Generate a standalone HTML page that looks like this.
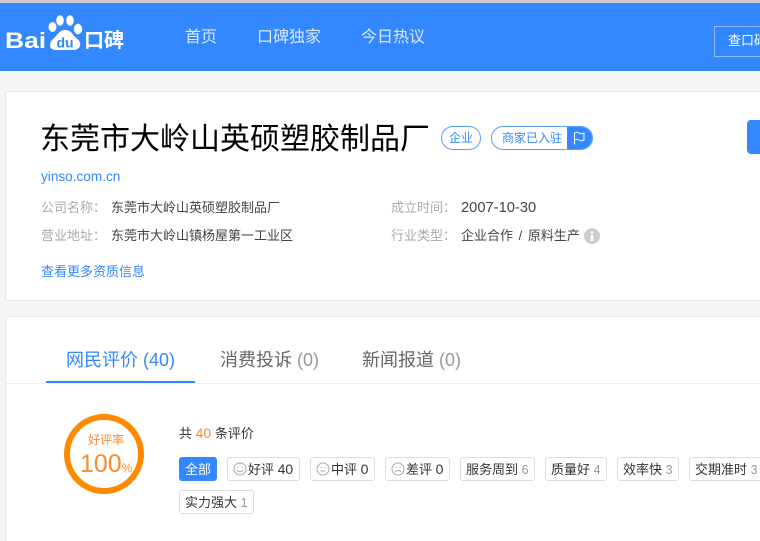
<!DOCTYPE html>
<html lang="zh">
<head>
<meta charset="utf-8">
<style>
html,body{margin:0;padding:0;width:760px;height:541px;overflow:hidden}
body{background:#f5f5f5;font-family:"Liberation Sans","Noto Sans CJK SC",sans-serif;color:#333}
#w{position:relative;width:760px;height:541px;overflow:hidden;background:#f5f5f5}
.a{position:absolute;white-space:nowrap;line-height:1}
.card{position:absolute;left:5px;width:755px;background:#fff;border:1px solid #e8e8e8;border-right:0;border-radius:4px 0 0 4px;box-sizing:border-box}
.tag{position:absolute;top:457px;height:24px;box-sizing:border-box;border:1px solid #ddd;border-radius:3px;background:#fff;font-size:13px;line-height:23px;color:#333;white-space:nowrap;padding-left:5px;overflow:hidden}
.tag b{font-weight:normal;font-size:14px}
.tag i{font-style:normal;color:#999;font-size:12.500px}
.tag svg{vertical-align:-2px;margin-right:1px}
.l{color:#aaa;font-size:13px}
.v{color:#444;font-size:13px}
</style>
</head>
<body>
<div id="w">
<div class="a" style="left:0;top:0;width:760px;height:3px;background:#c9c9c9"></div>
<div class="a" style="left:0;top:3px;width:760px;height:68px;background:#3388ff"></div>

<div class="a" style="left:5px;top:30px;font-size:22px;font-weight:bold;color:#fff;transform:scaleX(1.200);transform-origin:0 0">Bai</div>
<svg class="a" style="left:46px;top:14px" width="38" height="38" viewBox="0 0 38 38">
<g fill="#fff">
<ellipse cx="6.500" cy="13" rx="4" ry="5"/><ellipse cx="14" cy="6.500" rx="3.800" ry="5.200"/><ellipse cx="24" cy="6.500" rx="3.800" ry="5.200"/><ellipse cx="32" cy="15" rx="4.200" ry="5.200"/>
<path d="M19 16c5 0 7 3 10 7 4 3 6 5 5 9-1 3-4 4-7 4H11c-4 0-7-1-7-5 0-3 2-5 5-8 3-3 5-7 10-7z"/>
</g>
<text x="19" y="33.500" text-anchor="middle" font-size="14" font-weight="bold" fill="#3388ff" font-family="Liberation Sans">du</text>
</svg>
<div class="a" style="left:84px;top:31px;font-size:20px;font-weight:bold;color:#fff">口碑</div>

<div class="a" style="left:185px;top:30px;font-size:16px;color:#d9e8ff">首页</div>
<div class="a" style="left:257px;top:30px;font-size:16px;color:#d9e8ff">口碑独家</div>
<div class="a" style="left:361px;top:30px;font-size:16px;color:#d9e8ff">今日热议</div>
<div class="a" style="left:714px;top:26px;width:46px;height:31px;box-sizing:border-box;border:1px solid #8fbbfb;border-right:0;color:#fff;font-size:13px;line-height:27px;padding-left:13px;overflow:hidden">查口碑</div>

<div class="card" style="top:91px;height:210px"></div>
<div class="a" style="left:40px;top:125px;font-size:30px;color:#000">东莞市大岭山英硕塑胶制品厂</div>

<div class="a" style="left:441px;top:126px;width:40px;height:24px;box-sizing:border-box;border:1px solid #5c9eff;border-radius:12px;color:#3388ff;font-size:12px;line-height:22px;text-align:center">企业</div>
<div class="a" style="left:491px;top:126px;width:102px;height:24px;box-sizing:border-box;border:1px solid #5c9eff;border-radius:12px;color:#3388ff;font-size:12px;line-height:22px;padding-left:10px;overflow:hidden">商家已入驻
<span style="position:absolute;left:75px;top:0;width:26px;height:22px;background:#3388ff"></span>
<svg style="position:absolute;left:80px;top:4px" width="14" height="14" viewBox="0 0 14 14" fill="none" stroke="#fff" stroke-width="1"><path d="M2.500 13.500V2c1.500-1 3-1 4.500 0s3 1 5 0v7c-2 1-3.500 1-5 0s-3-1-4.500 0"/></svg>
</div>
<div class="a" style="left:747px;top:120px;width:13px;height:34px;background:#3388ff;border-radius:4px 0 0 4px"></div>

<div class="a" style="left:41px;top:170px;font-size:13.600px;color:#3388ff">yinso.com.cn</div>

<div class="a l" style="left:41px;top:201px">公司名称：</div>
<div class="a v" style="left:111px;top:201px">东莞市大岭山英硕塑胶制品厂</div>
<div class="a l" style="left:41px;top:229px">营业地址：</div>
<div class="a v" style="left:111px;top:229px">东莞市大岭山镇杨屋第一工业区</div>
<div class="a l" style="left:391px;top:201px">成立时间：</div>
<div class="a v" style="left:461px;top:201px;font-size:14.700px">2007-10-30</div>
<div class="a l" style="left:391px;top:229px">行业类型：</div>
<div class="a v" style="left:461px;top:229px;word-spacing:2px">企业合作 / 原料生产</div>
<svg class="a" style="left:584px;top:228px" width="16" height="16" viewBox="0 0 16 16"><circle cx="8" cy="8" r="8" fill="#ccc"/><rect x="6.800" y="7" width="2.400" height="6" fill="#fff"/><circle cx="8" cy="4.500" r="1.400" fill="#fff"/></svg>
<div class="a" style="left:41px;top:265px;font-size:13px;color:#3388ff">查看更多资质信息</div>

<div class="card" style="top:316px;height:225px;border-bottom:0;border-radius:4px 0 0 0"></div>
<div class="a" style="left:6px;top:383px;width:754px;height:1px;background:#eee"></div>
<div class="a" style="left:66px;top:351px;font-size:18px;color:#3388ff">网民评价 (40)</div>
<div class="a" style="left:46px;top:381px;width:149px;height:2px;background:#3388ff"></div>
<div class="a" style="left:220px;top:351px;font-size:18px;color:#666">消费投诉 <span style="color:#999">(0)</span></div>
<div class="a" style="left:362px;top:351px;font-size:18px;color:#666">新闻报道 <span style="color:#999">(0)</span></div>

<div class="a" style="left:64px;top:414px;width:80px;height:80px;box-sizing:border-box;border:6px solid #ff8a00;border-radius:50%"></div>
<div class="a" style="left:64px;top:434px;width:84px;text-align:center;font-size:12px;color:#ff8a2a">好评率</div>
<div class="a" style="left:80px;top:452px;font-size:25px;color:#ff8a2a">100<span style="font-size:12px">%</span></div>

<div class="a" style="left:179px;top:426px;font-size:13px;color:#333">共 <span style="color:#ff8a2a;font-size:14px">40</span> 条评价</div>

<div class="tag" style="left:179px;width:38px;background:#3388ff;border-color:#3388ff;color:#fff">全部</div>
<div class="tag" style="left:227px;width:73px">
<svg width="14" height="14" viewBox="0 0 14 14" fill="none" stroke="#aaa"><circle cx="7" cy="7" r="6"/><path d="M4 8.200c1.500 2 4.500 2 6 0"/><path d="M5 5v1M9 5v1"/></svg>好评 <b>40</b></div>
<div class="tag" style="left:310px;width:65px">
<svg width="14" height="14" viewBox="0 0 14 14" fill="none" stroke="#aaa"><circle cx="7" cy="7" r="6"/><path d="M4.500 9h5"/><path d="M5 5v1M9 5v1"/></svg>中评 <b>0</b></div>
<div class="tag" style="left:385px;width:65px">
<svg width="14" height="14" viewBox="0 0 14 14" fill="none" stroke="#aaa"><circle cx="7" cy="7" r="6"/><path d="M4 10c1.500-2 4.500-2 6 0"/><path d="M5 5v1M9 5v1"/></svg>差评 <b>0</b></div>
<div class="tag" style="left:460px;width:75px">服务周到 <i>6</i></div>
<div class="tag" style="left:545px;width:62px">质量好 <i>4</i></div>
<div class="tag" style="left:617px;width:62px">效率快 <i>3</i></div>
<div class="tag" style="left:689px;width:71px;border-right:0;border-radius:3px 0 0 3px">交期准时 <i>3</i></div>
<div class="tag" style="left:179px;top:490px;width:75px">实力强大 <i>1</i></div>
</div>
</body>
</html>
